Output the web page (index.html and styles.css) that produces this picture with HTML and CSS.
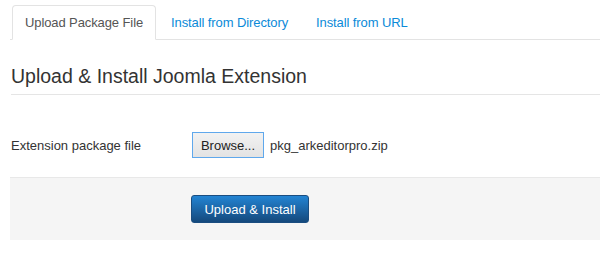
FILE: index.html
```html
<!DOCTYPE html>
<html>
<head>
<meta charset="utf-8">
<link rel="stylesheet" href="styles.css">
</head>
<body>
<div class="page">
  <ul class="tabs">
    <li class="tab active"><a>Upload Package File</a></li>
    <li class="tab"><a>Install from Directory</a></li>
    <li class="tab"><a>Install from URL</a></li>
  </ul>
  <div class="pane">
    <h2 class="legend">Upload &amp; Install Joomla Extension</h2>
    <div class="row">
      <div class="label">Extension package file</div>
      <div class="controls">
        <span class="browse">Browse...</span>
        <span class="filename">pkg_arkeditorpro.zip</span>
      </div>
    </div>
    <div class="actions">
      <span class="btn-primary">Upload &amp; Install</span>
    </div>
  </div>
</div>
</body>
</html>
```
FILE: styles.css
```css
html, body {
  margin: 0;
  padding: 0;
  background: #fff;
  font-family: "Liberation Sans", Arial, sans-serif;
  font-size: 13px;
  color: #333;
}
.page {
  padding: 5px 0 0 10px;
}
.tabs {
  list-style: none;
  margin: 0;
  padding: 0 0 0 2px;
  display: flex;
  border-bottom: 1px solid #e3e3e3;
}
.tab {
  margin-bottom: -1px;
  margin-right: 2px;
}
.tab a {
  display: block;
  padding: 8px 12px 7px 12px;
  line-height: 18px;
  border: 1px solid transparent;
  border-radius: 4px 4px 0 0;
  color: #0b8ad8;
  font-size: 13px;
  letter-spacing: -0.1px;
}
.tab.active a {
  color: #555;
  background: #fff;
  border-color: #e3e3e3 #e3e3e3 transparent;
}
.pane {
  padding-top: 21px;
}
.legend {
  margin: 0 0 0 1px;
  font-weight: normal;
  font-size: 19.5px;
  line-height: 30px;
  color: #333;
  border-bottom: 1px solid #e5e5e5;
  padding-bottom: 3px;
}
.row {
  display: flex;
  align-items: center;
  margin-top: 37px;
}
.label {
  width: 181px;
  padding-left: 1px;
  color: #333;
}
.controls {
  display: flex;
  align-items: center;
  gap: 6px;
}
.browse {
  box-sizing: border-box;
  width: 72px;
  height: 26px;
  display: flex;
  align-items: center;
  justify-content: center;
  border: 1px solid #5fa8ec;
  background: linear-gradient(#f2f2f2, #e3e3e3);
  color: #222;
}
.filename {
  color: #333;
}
.actions {
  margin-top: 19px;
  background: #f5f5f5;
  border-top: 1px solid #e8e8e8;
  height: 62px;
  padding-left: 181px;
  display: flex;
  align-items: flex-start;
}
.btn-primary {
  margin-top: 17px;
  box-sizing: border-box;
  width: 118px;
  height: 28px;
  display: flex;
  align-items: center;
  justify-content: center;
  border: 1px solid #1a4d80;
  border-radius: 3px;
  background: linear-gradient(#2384d3, #15497c);
  color: #fff;
  font-size: 13px;
}
```
